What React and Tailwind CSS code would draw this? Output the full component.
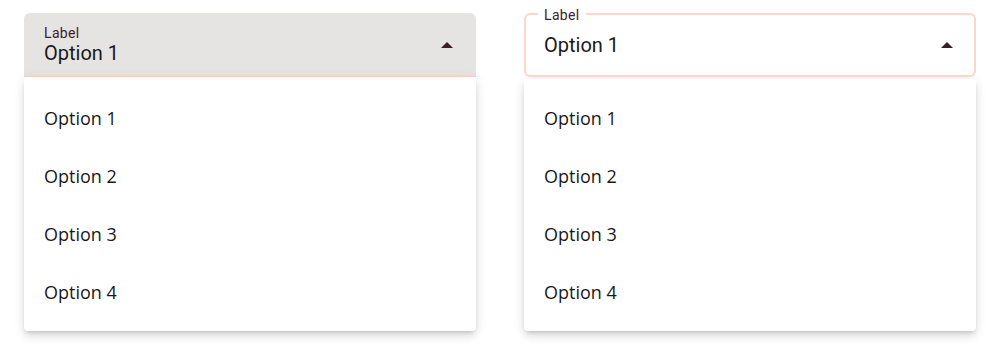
import React from 'react';

const options = ['Option 1', 'Option 2', 'Option 3', 'Option 4'];

const Arrow = () => (
  <svg width="12" height="6" viewBox="0 0 12 6" className="shrink-0">
    <path d="M0 6 L6 0 L12 6 Z" fill="#3a1f25" />
  </svg>
);

const Menu = ({ top }) => (
  <ul className={`rounded bg-white pb-2.5 shadow-[0_3px_4px_-2px_rgba(0,0,0,0.16),0_6px_10px_0_rgba(0,0,0,0.08),0_2px_12px_1px_rgba(0,0,0,0.07)] ${top}`}>
    {options.map((o) => (
      <li key={o} className="flex h-[58px] items-center px-5 font-['Open_Sans',sans-serif] text-[18px] text-[#1a1819]">
        {o}
      </li>
    ))}
  </ul>
);

const FilledSelect = () => (
  <div className="flex-1">
    <div className="flex h-16 items-center justify-between rounded-t-md border-b border-[#fcd4c7] bg-[#e6e4e2] pl-5 pr-[23px]">
      <div className="flex flex-col">
        <span className="text-[14px] leading-4 tracking-wide text-[#3b2228]">Label</span>
        <span className="text-[20px] leading-6 text-[#1a1819]">Option 1</span>
      </div>
      <Arrow />
    </div>
    <Menu top="pt-3" />
  </div>
);

const OutlinedSelect = () => (
  <div className="flex-1">
    <div className="relative flex h-16 items-center justify-between rounded-md border-2 border-[#fdd6ca] pl-[18px] pr-[21px]">
      <span className="absolute -top-[8px] left-3 bg-white px-1.5 text-[14px] leading-4 tracking-wide text-[#3b2228]">
        Label
      </span>
      <span className="text-[20px] leading-6 text-[#1a1819]">Option 1</span>
      <Arrow />
    </div>
    <div className="pt-0.5">
      <Menu top="pt-2.5" />
    </div>
  </div>
);

export default function App() {
  return (
    <div className="flex h-[363px] w-[1000px] gap-12 bg-white px-6 pt-[13px] font-['Roboto',sans-serif]">
      <FilledSelect />
      <OutlinedSelect />
    </div>
  );
}
